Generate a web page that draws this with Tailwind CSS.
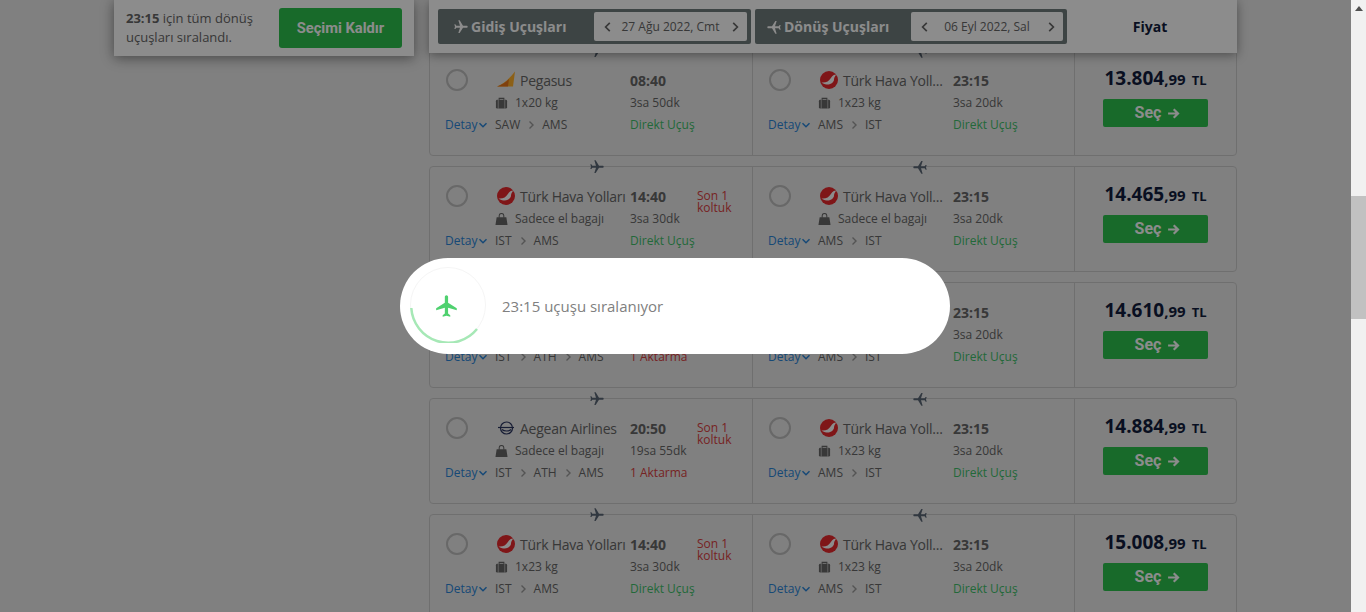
<!DOCTYPE html>
<html lang="tr">
<head>
    <meta charset="UTF-8">
    <title>Uçuş Sonuçları</title>
    <script src="https://cdn.jsdelivr.net/npm/@tailwindcss/browser@4"></script>
</head>
<body class="overflow-hidden">
<svg class="hidden">
    <symbol id="plane" viewBox="0 0 24 24"><path d="M21 16v-2l-8-5V3.5c0-.83-.67-1.5-1.5-1.5S10 2.67 10 3.5V9l-8 5v2l8-2.5V19l-2 1.5V22l3.5-1 3.5 1v-1.5L13 19v-5.5l8 2.5z"/></symbol>
    <symbol id="thy" viewBox="0 0 18 18"><circle cx="9" cy="9" r="9" fill="#e8282c"/><path d="M1.5 11.5C6 12 9 10 10.5 7.5L12 5.5C13 4.2 14.5 3.5 16 3.5 15.5 5 14 6.5 14 8.5 14 11 11 14 6.5 13.5 4.5 13.3 3 12.5 1.5 11.5Z" fill="#fff"/></symbol>
    <symbol id="pegasus" viewBox="0 0 18 18"><path d="M0 15.5C6 13.5 12 8 18 .5L16 15.5Z" fill="#ffb02a"/><path d="M0 15.5C5 13.8 9 11 12 8L11 15.5Z" fill="#e8761c"/></symbol>
    <symbol id="aegean" viewBox="0 0 18 18"><g fill="none" stroke="#2a3560" stroke-width="1.2"><circle cx="9.5" cy="9" r="6"/><path d="M1 8.5H17"/><path d="M5 10.5C7 12.5 12 12.5 14 10.5"/></g></symbol>
    <symbol id="bag" viewBox="0 0 14 14"><path d="M4.5 3V1.5h5V3" fill="none" stroke="currentColor" stroke-width="1.2"/><rect x="1" y="3" width="12" height="9.5" rx="1.5" fill="currentColor"/><path d="M3.5 3v9.5M10.5 3v9.5" stroke="#e9e9e9" stroke-width=".6"/></symbol>
    <symbol id="handbag" viewBox="0 0 14 14"><path d="M4.5 5V3a2.5 2.5 0 0 1 5 0v2" fill="none" stroke="currentColor" stroke-width="1.1"/><path d="M1.8 4.5h10.4L13.5 13H.5z" fill="currentColor"/></symbol>
    <symbol id="chev" viewBox="0 0 10 10"><path d="M1.5 3.2 5 6.7l3.5-3.5" fill="none" stroke="currentColor" stroke-width="1.5"/></symbol>
    <symbol id="left" viewBox="0 0 10 10"><path d="M6.5 1.5 3 5l3.5 3.5" fill="none" stroke="currentColor" stroke-width="1.4"/></symbol>
    <symbol id="right" viewBox="0 0 10 10"><path d="M3.5 1.5 7 5 3.5 8.5" fill="none" stroke="currentColor" stroke-width="1.4"/></symbol>
    <symbol id="arrow" viewBox="0 0 12 12"><path d="M1 6h9M6.2 2 10.2 6l-4 4" fill="none" stroke="currentColor" stroke-width="2"/></symbol>
</svg>

<div class="flex h-[612px] font-['Open_Sans'] text-[#666666]">
    <main class="relative flex-1 min-w-0 h-[612px] overflow-hidden bg-[#e9e9e9]">
        <div class="flex items-start pl-[114px]">
            <!-- Selected flight panel -->
            <aside class="flex items-start justify-between w-[300px] h-[56px] pl-[12px] pr-[12px] pt-[8px] bg-white shadow-[0_2px_12px_rgba(0,0,0,0.45)]">
                <p class="w-[150px] text-[13px] leading-[19px] pt-[1px]"><b>23:15</b> için tüm dönüş uçuşları sıralandı.</p>
                <button class="w-[123px] h-[40px] rounded-[3px] bg-[#2cc14e] text-white text-[14.7px] font-bold font-[Roboto]">Seçimi Kaldır</button>
            </aside>

            <!-- Results -->
            <section class="ml-[15px] w-[808px]">
                <header class="relative z-10 flex items-center h-[53px] pl-[9px] bg-white shadow-[0_2px_10px_rgba(0,0,0,0.4)]">
                    <div class="flex items-center justify-between w-[313px] h-[35px] pl-[15px] pr-[4px] rounded-[2px] bg-[#707c7c]">
                        <span class="flex items-center gap-[2px] text-white text-[14px] font-bold"><svg class="w-[16px] h-[16px] rotate-90 fill-white"><use href="#plane"/></svg>Gidiş Uçuşları</span>
                        <div class="flex items-center justify-between w-[153px] h-[29px] pl-[8px] pr-[6px] rounded-[2px] bg-white text-[12px]">
                            <svg class="w-[12px] h-[12px]"><use href="#left"/></svg><span class="mr-[2px]">27 Ağu 2022, Cmt</span><svg class="w-[12px] h-[12px]"><use href="#right"/></svg>
                        </div>
                    </div>
                    <div class="ml-[4px] flex items-center justify-between w-[312px] h-[35px] pl-[11px] pr-[4px] rounded-[2px] bg-[#707c7c]">
                        <span class="flex items-center gap-[2px] text-white text-[14px] font-bold"><svg class="w-[16px] h-[16px] -rotate-90 fill-white"><use href="#plane"/></svg>Dönüş Uçuşları</span>
                        <div class="flex items-center justify-between w-[152px] h-[29px] pl-[8px] pr-[6px] rounded-[2px] bg-white text-[12px]">
                            <svg class="w-[12px] h-[12px]"><use href="#left"/></svg><span class="mr-[2px]">06 Eyl 2022, Sal</span><svg class="w-[12px] h-[12px]"><use href="#right"/></svg>
                        </div>
                    </div>
                    <div class="flex-1 pr-[4px] text-center text-[14px] font-bold text-[#121c3c]">Fiyat</div>
                </header>
                <div id="cards" class="-mt-[3px] flex flex-col gap-[10px]"></div>
            </section>
        </div>

        <!-- Dimming overlay with the sorting message -->
        <div class="absolute inset-0 z-20 bg-black/45"></div>
        <div class="absolute z-30 left-[400px] top-[258px] flex items-center w-[550px] h-[96px] pl-[10px] rounded-[48px] bg-white">
            <div class="relative w-[76px] h-[76px] -mt-[2px]">
                <svg class="w-[76px] h-[76px]" viewBox="0 0 76 76" fill="none">
                    <circle cx="38" cy="38" r="37.5" stroke="#f5f5f5" stroke-width="1"/>
                    <path d="M1.3 41A37 37 0 0 0 67 62" stroke="#a6e8b6" stroke-width="2.5"/>
                </svg>
                <svg class="absolute left-[24px] top-[26px] w-[26px] h-[26px] fill-[#4fd16f]"><use href="#plane"/></svg>
            </div>
            <span class="ml-[16px] text-[15px] text-[#808080]">23:15 uçuşu sıralanıyor</span>
        </div>
    </main>

    <!-- Scrollbar -->
    <div class="relative w-[15px] bg-[#f1f1f1]">
        <div class="mx-auto mt-[6px] w-0 h-0 border-x-[4px] border-x-transparent border-b-[5px] border-b-[#505050]"></div>
        <div class="mt-[185px] h-[123px] bg-[#c1c1c1]"></div>
    </div>
</div>

<script>
    const thy = { logo: 'thy', name: 'Türk Hava Yolları' };
    const thyShort = { logo: 'thy', name: 'Türk Hava Yoll...' };
    const back = { ...thyShort, time: '23:15', bag: '1x23 kg', bagIcon: 'bag', dur: '3sa 20dk', route: ['AMS', 'IST'] };
    const handOnly = { bag: 'Sadece el bagajı', bagIcon: 'handbag' };

    const rows = [
        { out: { logo: 'pegasus', name: 'Pegasus', time: '08:40', bag: '1x20 kg', bagIcon: 'bag', dur: '3sa 50dk', route: ['SAW', 'AMS'] }, back, price: '13.804' },
        { out: { ...thy, ...handOnly, time: '14:40', dur: '3sa 30dk', route: ['IST', 'AMS'], seat: true }, back: { ...back, ...handOnly }, price: '14.465' },
        { out: { logo: 'aegean', name: 'Aegean Airlines', ...handOnly, time: '14:40', dur: '8sa 10dk', route: ['IST', 'ATH', 'AMS'], stop: true }, back, price: '14.610' },
        { out: { logo: 'aegean', name: 'Aegean Airlines', ...handOnly, time: '20:50', dur: '19sa 55dk', route: ['IST', 'ATH', 'AMS'], stop: true, seat: true }, back, price: '14.884' },
        { out: { ...thy, time: '14:40', bag: '1x23 kg', bagIcon: 'bag', dur: '3sa 30dk', route: ['IST', 'AMS'], seat: true }, back, price: '15.008' },
    ];

    function leg(f, dir, width) {
        const route = f.route.map(c => `<span>${c}</span>`).join('<svg class="w-[10px] h-[10px] mx-[6px] text-[#9a9a9a]"><use href="#right"/></svg>');
        return `
        <div class="relative shrink-0 h-full pl-[15px] pt-[17px] grid grid-cols-[50px_135px_67px_1fr] grid-rows-[24px_22px_22px] items-center border-r border-[#cbcbcb] ${width}">
            <svg class="absolute left-[159px] -top-[8px] w-[16px] h-[16px] fill-[#5a6675] ${dir}"><use href="#plane"/></svg>
            <span class="block w-[22px] h-[22px] ml-[1px] rounded-full border-2 border-[#bdbdbd]"></span>
            <div class="flex items-center text-[14px] tracking-[-0.25px] whitespace-nowrap"><svg class="ml-[2px] mr-[5px] w-[18px] h-[18px] shrink-0"><use href="#${f.logo}"/></svg>${f.name}</div>
            <b class="text-[14px]">${f.time}</b>
            <div class="row-span-2 self-start pt-[6px] text-[12px] leading-[12px] text-[#d84040]">${f.seat ? 'Son 1 koltuk' : ''}</div>
            <span></span>
            <div class="flex items-center text-[12px] whitespace-nowrap"><svg class="mr-[7px] w-[13px] h-[13px] shrink-0"><use href="#${f.bagIcon}"/></svg>${f.bag}</div>
            <span class="text-[12px]">${f.dur}</span>
            <span class="flex items-center text-[12px] text-[#2a85d8]">Detay<svg class="ml-[1px] w-[10px] h-[10px]"><use href="#chev"/></svg></span>
            <div class="flex items-center text-[12px]">${route}</div>
            <span class="col-span-2 text-[12px] whitespace-nowrap ${f.stop ? 'text-[#d84040]' : 'text-[#3fbf6a]'}">${f.stop ? '1 Aktarma' : 'Direkt Uçuş'}</span>
        </div>`;
    }

    document.getElementById('cards').innerHTML = rows.map(r => `
        <article class="flex h-[106px] rounded-[4px] border border-[#cbcbcb]">
            ${leg(r.out, 'rotate-90', 'w-[323px]')}
            ${leg(r.back, '-rotate-90', 'w-[322px]')}
            <div class="flex-1 flex flex-col items-center pt-[13px]">
                <div class="h-[35px] whitespace-nowrap font-bold text-[#121c3c]"><span class="text-[19px]">${r.price}</span><span class="text-[15px]">,99</span><span class="ml-[6px] text-[13px]">TL</span></div>
                <button class="flex items-center justify-center gap-[6px] w-[105px] h-[28px] pl-[4px] rounded-[2px] bg-[#2cc14e] text-white text-[16px] font-bold font-[Roboto]">Seç<svg class="w-[13px] h-[13px]"><use href="#arrow"/></svg></button>
            </div>
        </article>`).join('');
</script>
</body>
</html>
